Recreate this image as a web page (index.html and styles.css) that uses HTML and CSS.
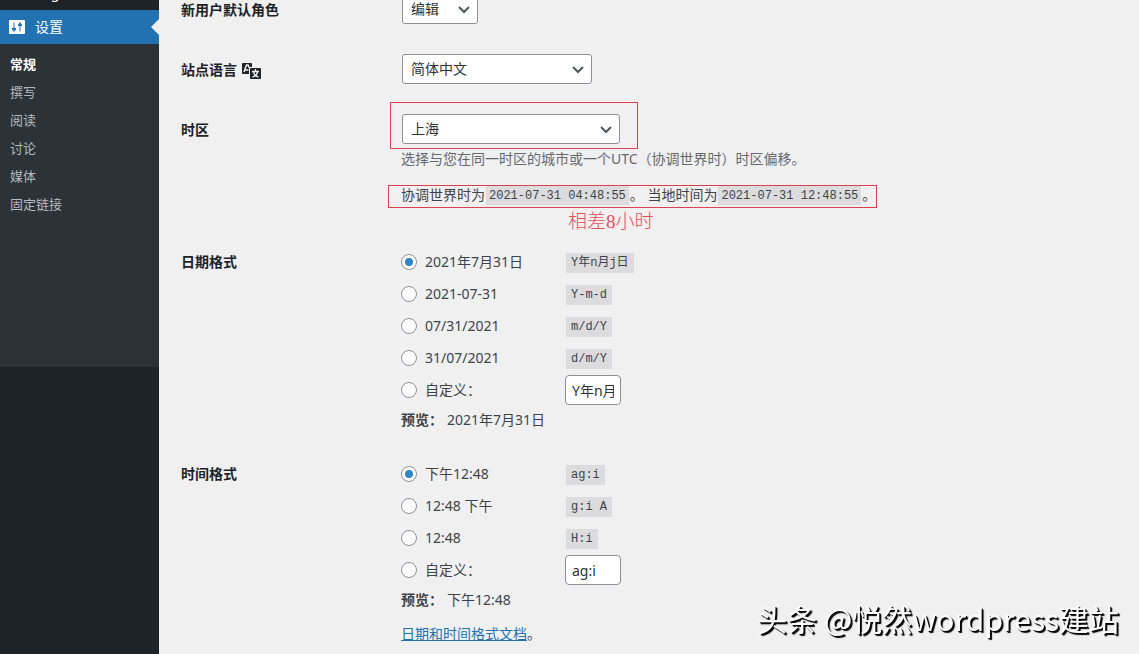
FILE: index.html
```html
<!DOCTYPE html>
<html lang="zh-CN">
<head>
    <meta charset="UTF-8">
    <meta name="viewport" content="width=device-width, initial-scale=1.0">
    <title>常规选项</title>
    <link rel="stylesheet" href="styles.css">
</head>
<body>

<div class="wrap">
    <!-- Admin menu -->
    <nav class="sidebar">
        <a class="menu-item" href="#"><span class="menu-icon"></span>Log</a>
        <a class="menu-item current" href="#">
            <svg class="menu-icon" width="16" height="16" viewBox="0 0 16 16">
                <rect x="0" y="1" width="16" height="14" rx="1" fill="#fff"/>
                <path d="M5 3.500v9M11 3.500v9" stroke="#2271b1" stroke-width="1"/>
                <path d="M3 9h4v1.500L5 12.500 3 10.500zM9 7h4V5.500L11 3.500 9 5.500z" fill="#2271b1"/>
            </svg>
            设置
        </a>
        <ul class="submenu">
            <li><a class="active" href="#">常规</a></li>
            <li><a href="#">撰写</a></li>
            <li><a href="#">阅读</a></li>
            <li><a href="#">讨论</a></li>
            <li><a href="#">媒体</a></li>
            <li><a href="#">固定链接</a></li>
        </ul>
    </nav>

    <!-- General settings -->
    <form class="settings">
        <div class="row">
            <label class="title" for="role">新用户默认角色</label>
            <div class="select role">
                <select id="role"><option>编辑</option></select>
                <svg width="12" height="8" viewBox="0 0 12 8"><path d="M1 1l5 5 5-5"/></svg>
            </div>
        </div>

        <div class="row">
            <label class="title" for="language">站点语言
                <svg class="translate" width="20" height="18" viewBox="0 0 20 18">
                    <path d="M2 1h8a1 1 0 0 1 1 1v3H9a1 1 0 0 0-1 1v6H2a1 1 0 0 1-1-1V2a1 1 0 0 1 1-1z" fill="#1d2327"/>
                    <path d="M3 10l2.500-7h1.500l1.500 3M4 8h3.500" fill="none" stroke="#f0f0f1" stroke-width="1.500"/>
                    <rect x="9" y="6" width="11" height="11" rx="1" fill="#1d2327"/>
                    <path d="M14.500 7v2M11 9.500h7M12.500 10c.5 2.500 2.500 4.500 5 5M16.500 10c-.5 2.500-2.500 4.500-5 5" fill="none" stroke="#f0f0f1" stroke-width="1.300"/>
                </svg>
            </label>
            <div class="select language">
                <select id="language"><option>简体中文</option></select>
                <svg width="12" height="8" viewBox="0 0 12 8"><path d="M1 1l5 5 5-5"/></svg>
            </div>
        </div>

        <div class="row">
            <label class="title" for="timezone">时区</label>
            <div class="timezone-cell">
                <div class="select timezone">
                    <select id="timezone"><option>上海</option></select>
                    <svg width="12" height="8" viewBox="0 0 12 8"><path d="M1 1l5 5 5-5"/></svg>
                </div>
                <p class="description">选择与您在同一时区的城市或一个UTC（协调世界时）时区偏移。</p>
                <p class="times">
                    <span>协调世界时为</span><code>2021-07-31 04:48:55</code><span>。 当地时间为</span><code>2021-07-31 12:48:55</code><span>。</span>
                    <span class="note">相差8小时</span>
                </p>
            </div>
        </div>

        <div class="row">
            <div class="title" id="date-title">日期格式</div>
            <div role="radiogroup" aria-labelledby="date-title">
                <div class="choice"><label><input type="radio" name="date" checked>2021年7月31日</label><code>Y年n月j日</code></div>
                <div class="choice"><label><input type="radio" name="date">2021-07-31</label><code>Y-m-d</code></div>
                <div class="choice"><label><input type="radio" name="date">07/31/2021</label><code>m/d/Y</code></div>
                <div class="choice"><label><input type="radio" name="date">31/07/2021</label><code>d/m/Y</code></div>
                <div class="choice"><label><input type="radio" name="date">自定义：</label><input type="text" value="Y年n月j日" aria-label="自定义日期格式"></div>
                <p class="preview"><strong>预览：</strong>2021年7月31日</p>
            </div>
        </div>

        <div class="row">
            <div class="title" id="time-title">时间格式</div>
            <div role="radiogroup" aria-labelledby="time-title">
                <div class="choice"><label><input type="radio" name="time" checked>下午12:48</label><code>ag:i</code></div>
                <div class="choice"><label><input type="radio" name="time">12:48 下午</label><code>g:i A</code></div>
                <div class="choice"><label><input type="radio" name="time">12:48</label><code>H:i</code></div>
                <div class="choice"><label><input type="radio" name="time">自定义：</label><input type="text" value="ag:i" aria-label="自定义时间格式"></div>
                <p class="preview"><strong>预览：</strong>下午12:48</p>
                <p class="docs"><a href="#">日期和时间格式文档</a>。</p>
            </div>
        </div>
    </form>
</div>

<div class="watermark">头条 @悦然wordpress建站</div>

</body>
</html>
```
FILE: styles.css
```css
* {
    box-sizing: border-box;
}
body {
    margin: 0;
    font-family: "Noto Sans", "Noto Sans CJK SC", sans-serif;
    font-size: 14px;
    line-height: 20px;
    color: #3c434a;
    background-color: #f0f0f1;
    overflow-x: hidden;
}
p {
    margin: 0;
}
.wrap {
    display: flex;
    min-height: 100vh;
}

/* Sidebar */
.sidebar {
    width: 159px;
    flex-shrink: 0;
    margin-top: -24px;
    background-color: #1d2327;
}
.menu-item {
    position: relative;
    display: flex;
    align-items: center;
    gap: 10px;
    height: 34px;
    padding-left: 9px;
    color: #fff;
    text-decoration: none;
}
.menu-icon {
    width: 16px;
    height: 16px;
}
.menu-item.current {
    background-color: #2271b1;
}
.menu-item.current::after {
    content: "";
    position: absolute;
    right: 0;
    top: 9px;
    border: 8px solid transparent;
    border-left: 0;
    border-right-color: #f0f0f1;
}
.submenu {
    list-style: none;
    margin: 0;
    padding: 6px 0 149px;
    background-color: #2c3338;
}
.submenu a {
    display: block;
    padding: 4px 10px;
    font-size: 13px;
    color: #b4b9be;
    text-decoration: none;
}
.submenu .active {
    font-weight: bold;
    color: #fff;
}

/* Settings form */
.settings {
    flex: 1;
    margin-top: -21px;
    padding-left: 22px;
}
.row {
    display: grid;
    grid-template-columns: 220px 1fr;
    padding-top: 15px;
    padding-bottom: 15px;
}
.title {
    display: flex;
    align-items: center;
    gap: 4px;
    height: 32px;
    margin-bottom: -2px;
    font-weight: bold;
    color: #1d2327;
}
.translate {
    margin-top: 2px;
}
.select {
    position: relative;
    height: 30px;
    margin-left: 1px;
}
.select.role {
    width: 76px;
}
.select.language {
    width: 190px;
}
.select.timezone {
    width: 218px;
}
.select select {
    appearance: none;
    width: 100%;
    height: 30px;
    padding: 0 24px 0 8px;
    border: 1px solid #8c8f94;
    border-radius: 3px;
    background-color: #fff;
    font: inherit;
    color: #2c3338;
}
.select svg {
    position: absolute;
    right: 8px;
    top: 12px;
    fill: none;
    stroke: #50575e;
    stroke-width: 2;
    pointer-events: none;
}

/* Red frames and note */
.select.timezone::before {
    content: "";
    position: absolute;
    top: -12px;
    right: -18px;
    bottom: -5px;
    left: -12px;
    border: 1px solid #d9414e;
}
.timezone-cell {
    padding-bottom: 8px;
}
.description {
    margin-top: 5px;
    color: #646970;
}
.times {
    position: relative;
    display: flex;
    width: max-content;
    height: 23px;
    margin: 16px 0 0 -13px;
    padding: 0 0 0 12px;
    border: 1px solid #d9414e;
    line-height: 18px;
}
.times span {
    white-space: pre;
}
.times code {
    height: 19px;
    padding: 0 3px;
    margin: 0 1px;
}
.times .note {
    position: absolute;
    top: 23px;
    left: 179px;
    font-family: "Liberation Serif", "Noto Sans CJK SC", serif;
    font-size: 19px;
    line-height: 26px;
    font-weight: 300;
    color: #e0505a;
}
code {
    padding: 0 5px;
    background-color: #dcdcde;
    font-family: "Liberation Mono", "Noto Sans CJK SC", monospace;
    font-size: 12px;
    line-height: 20px;
}

/* Radio lists */
.choice {
    display: flex;
    align-items: center;
    height: 32px;
}
.choice label {
    display: flex;
    align-items: center;
    gap: 8px;
    width: 164px;
}
.choice code {
    margin: 2px 1px 0;
}
input[type="radio"] {
    appearance: none;
    display: grid;
    place-items: center;
    width: 16px;
    height: 16px;
    margin: 0;
    border: 1px solid #8c8f94;
    border-radius: 50%;
    background-color: #fff;
}
input[type="radio"]:checked::before {
    content: "";
    width: 8px;
    height: 8px;
    border-radius: 50%;
    background-color: #3582c4;
}
input[type="text"] {
    width: 56px;
    height: 30px;
    padding: 0 6px;
    border: 1px solid #8c8f94;
    border-radius: 4px;
    background-color: #fff;
    font: inherit;
    color: #2c3338;
}
.preview {
    margin: 4px 0 -2px;
}
.preview strong {
    margin-right: 4px;
}
.docs {
    margin: 16px 0 -6px;
}
.docs a {
    color: #2271b1;
}

.watermark {
    position: fixed;
    right: 20px;
    bottom: 16px;
    font-family: "Noto Sans CJK SC", sans-serif;
    font-size: 30px;
    line-height: 40px;
    color: #fff;
    text-shadow: 1px 1px 0 #000, 2px 2px 1px #000;
}
```
